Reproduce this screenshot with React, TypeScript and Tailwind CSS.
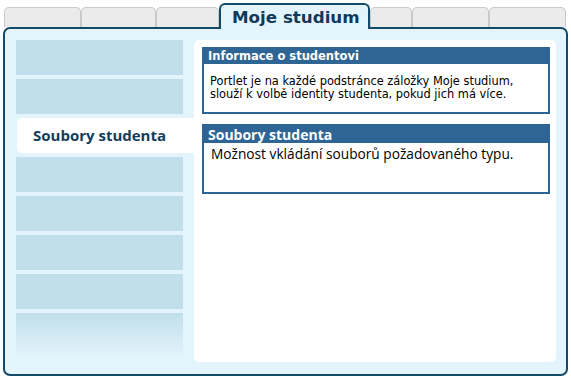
import React from "react"

const verdana = { fontFamily: '"DejaVu Sans", Verdana, sans-serif' }

// Inactive tabs left and right of the active one.
const leftTabs = ["w-[77px]", "w-[75px]", "w-[63px]"]
const rightTabs = ["w-[42px]", "w-[77px]", "w-[77px]"]

const menu = [
    { title: "", active: false },
    { title: "", active: false },
    { title: "Soubory studenta", active: true },
    { title: "", active: false },
    { title: "", active: false },
    { title: "", active: false },
    { title: "", active: false },
]

function Tab({ width }: { width: string }) {
    return (
        <div
            className={`${width} h-[20px] rounded-t-[5px] border border-b-0 border-[#c9c9c9] bg-[#ebebeb]`}
        />
    )
}

export default function App() {
    return (
        <div className="w-[571px] h-[380px] bg-white pt-[1px] font-['Segoe_UI','Open_Sans',sans-serif]">
            {/* tabs */}
            <div className="flex items-end pl-[4px] h-[26px] relative z-10">
                {leftTabs.map((w, i) => (
                    <Tab key={"l" + i} width={w} />
                ))}
                <div
                    style={verdana}
                    className="w-[151px] h-[26px] -mb-[2px] rounded-t-[6px] border-2 border-b-0 border-[#134a68] bg-[#e4f4fc] flex items-center pl-[11px] pt-[2px] text-[16.7px] font-bold text-[#0f3a59]"
                >
                    Moje studium
                </div>
                {rightTabs.map((w, i) => (
                    <Tab key={"r" + i} width={w} />
                ))}
            </div>

            {/* panel */}
            <div className="ml-[3px] w-[565px] h-[349px] rounded-[7px] border-2 border-[#134a68] bg-[#e4f4fc] flex pl-[11px] pt-[11px] pr-[10px] pb-[12px]">
                <div className="w-[178px] flex flex-col gap-[4px]">
                    {menu.map((item, i) =>
                        item.active ? (
                            <div
                                key={i}
                                className="ml-px h-[35px] rounded-l-[5px] bg-white flex items-center pl-[16px] text-[15px] font-bold text-[#123d5c]"
                            >
                                {item.title}
                            </div>
                        ) : (
                            <div key={i} className="w-[167px] h-[35px] bg-[#c0dfeb]" />
                        )
                    )}
                    <div className="w-[167px] h-[45px] bg-gradient-to-b from-[#c0dfeb] to-[#e4f4fc]" />
                </div>

                <div className="flex-1 bg-white rounded-[5px] pl-[8px] pt-[7px] pr-[6px] flex flex-col gap-[10px]">
                    <div className="border-2 border-[#2e6595]">
                        <div
                            style={verdana}
                            className="h-[15px] bg-[#2e6595] pl-[4px] text-[11.5px] leading-[15px] font-bold text-white"
                        >
                            Informace o studentovi
                        </div>
                        <div
                            style={verdana}
                            className="h-[48px] pl-[6px] pt-[11px] text-[11.4px] leading-[13px] text-black"
                        >
                            Portlet je na každé podstránce záložky Moje studium,
                            <br />
                            slouží k volbě identity studenta, pokud jich má více.
                        </div>
                    </div>

                    <div className="border-2 border-[#2e6595]">
                        <div className="h-[17px] bg-[#2e6595] pl-[4px] text-[14px] leading-[17px] font-bold text-white">
                            Soubory studenta
                        </div>
                        <div className="h-[49px] pl-[7px] pt-[2px] text-[13.7px] leading-[18px] text-black">
                            Možnost vkládání souborů požadovaného typu.
                        </div>
                    </div>
                </div>
            </div>
        </div>
    )
}
